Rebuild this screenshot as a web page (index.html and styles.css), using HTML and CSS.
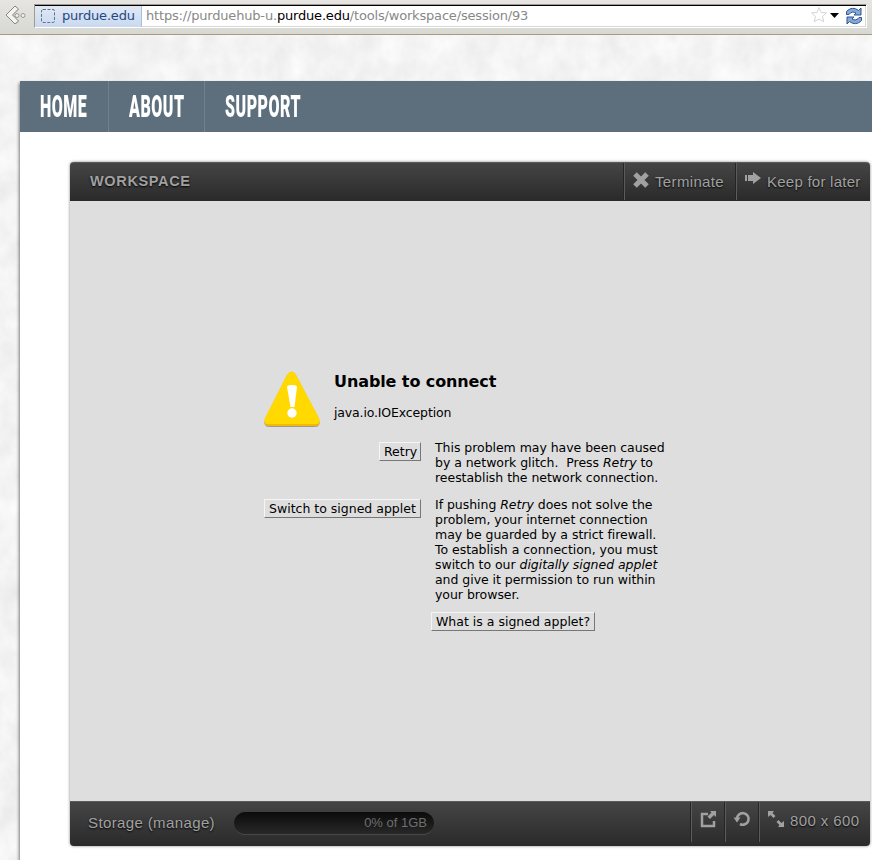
FILE: index.html
```html
<!DOCTYPE html>
<html lang="en">
<head>
<meta charset="utf-8">
<title>Workspace</title>
<link rel="stylesheet" href="styles.css">
</head>
<body>
<header class="browser">
  <svg class="back" width="25" height="24" viewBox="0 0 25 24"><path d="M13 3 5 11l8 9 3-2.500L10 11l6-5.500z" fill="#bbb"/><path d="M12 2 3 11l9 9 3.500-3-6-6L15.500 5z" fill="#f3f3f1" stroke="#888883"/><g fill="#eee" stroke="#999893"><circle cx="14" cy="11.500" r="2"/><circle cx="20" cy="11.500" r="2"/></g></svg>
  <div class="address">
    <div class="identity">
      <svg width="16" height="16" viewBox="0 0 16 16"><rect x="1.500" y="1.500" width="13" height="13" rx="1.500" fill="none" stroke="#68717b" stroke-dasharray="3 1.500"/></svg>
      <span>purdue.edu</span>
    </div>
    <div class="url">https://purduehub-u.<b>purdue.edu</b>/tools/workspace/session/93</div>
    <svg class="tools" width="56" height="20" viewBox="0 0 56 20"><path d="m10 1.500 2.100 5 5.400.3-4 3.700 1.300 5.300L10 13l-4.800 2.800 1.300-5.300-4-3.700 5.400-.3z" fill="#fff" stroke="#d4d4d4"/><path d="M21 7h9l-4.500 5z" fill="#000"/><g fill="#86a9d8" stroke="#2c5595" stroke-width="1" stroke-linejoin="round"><path d="M37.500 8.500v-3c4-4 8-4 12-1l2.500-2.500v7h-7l2-2q-4-2.500-7 1.500z"/><path d="M52.500 11.500v3c-4 4-8 4-12 1L38 18v-7h7l-2 2q4 2.500 7-1.500z"/></g></svg>
  </div>
</header>
<main class="page">
  <svg class="paper" width="872" height="825"><filter id="paper" x="0" y="0" width="100%" height="100%" color-interpolation-filters="sRGB"><feTurbulence type="fractalNoise" baseFrequency=".045 .035" numOctaves="4" seed="8"/><feColorMatrix values=".09 0 0 0 .91  .09 0 0 0 .91  .09 0 0 0 .91  0 0 0 0 1"/></filter><rect width="872" height="825" filter="url(#paper)"/></svg>
  <div class="site">
    <nav class="nav"><a class="home"><span>HOME</span></a><a class="about"><span>ABOUT</span></a><a class="support"><span>SUPPORT</span></a></nav>
    <section class="app">
      <div class="bar top">
        <h1>WORKSPACE</h1>
        <a class="terminate"><svg width="18" height="18" viewBox="0 0 18 18"><path d="M3 3l12 12M15 3 3 15" stroke="#a1a1a1" stroke-width="5"/></svg><span>Terminate</span></a>
        <a class="keep"><svg width="18" height="18" viewBox="0 0 18 18"><path d="M1 6h2v6H1zM4 6h5V3l8 6-8 6v-3H4z" fill="#a1a1a1"/></svg><span>Keep for later</span></a>
      </div>
      <div class="applet">
        <div class="dialog">
          <div class="heading">
            <svg width="58" height="58" viewBox="0 0 58 58"><path d="M24 6Q29 0 33 6L56 50Q58 57 52 57H6Q0 57 2 50z" fill="#9b9b99"/><path d="M24 5Q29-2 33 5L56 49Q58 56 52 56H6Q0 56 2 49z" fill="#f5b900"/><path d="M24 5Q29-2 33 5L56 48Q58 54 52 54H6Q0 54 2 48z" fill="#ffd900"/><path d="M24 17q0-2 5-2t5 2l-2.500 20h-4z" fill="#fff"/><circle cx="29" cy="43" r="4.700" fill="#fff"/></svg>
            <div><h2>Unable to connect</h2><p>java.io.IOException</p></div>
          </div>
          <div class="row retry"><button><span>Retry</span></button><p>This problem may have been caused
by a network glitch.  Press <i>Retry</i> to
reestablish the network connection.</p></div>
          <div class="row switch"><button><span>Switch to signed applet</span></button><p>If pushing <i>Retry</i> does not solve the
problem, your internet connection
may be guarded by a strict firewall.
To establish a connection, you must
switch to our <i>digitally signed applet</i>
and give it permission to run within
your browser.</p></div>
          <button class="what"><span>What is a signed applet?</span></button>
        </div>
      </div>
      <div class="bar bottom">
        <span class="storage">Storage (manage)</span>
        <div class="meter">0% of 1GB</div>
        <a class="icon"><svg width="18" height="18" viewBox="0 0 18 18"><path d="M9 4H3v12h12v-5" fill="none" stroke="#a1a1a1" stroke-width="2.500"/><path d="M11 1h6v6l-2-2-4 4-2.500-2.500 4-4z" fill="#a1a1a1"/></svg></a>
        <a class="icon"><svg width="18" height="18" viewBox="0 0 18 18"><path d="M4 9a5.800 5.800 0 1 1 3 5" fill="none" stroke="#a1a1a1" stroke-width="2.600"/><path d="M.5 7.500h7L4 12.500z" fill="#a1a1a1"/></svg></a>
        <a class="size"><svg width="18" height="18" viewBox="0 0 18 18"><path d="M1 1h6L5.500 3l3 3-2 2-3-3L1 7zM17 17h-6l1.500-2-3-3 2-2 3 3 2.500-2z" fill="#a1a1a1"/></svg><span>800 x 600</span></a>
      </div>
    </section>
  </div>
</main>
</body>
</html>
```
FILE: styles.css
```css
* { box-sizing: border-box; }
body { margin: 0; width: 872px; height: 860px; overflow: hidden; font-family: "Liberation Sans", sans-serif; }
h1, h2, p { margin: 0; font-weight: normal; }
.browser { height: 35px; display: flex; padding: 4px 5px 0 3px; background: linear-gradient(#e6e5e1, #d8d8d2); border-bottom: 1px solid #a39a8a; font: 13px/22px "DejaVu Sans", sans-serif; }
.back { flex: none; margin-right: 6px; }
.address { flex: 1; height: 24px; display: flex; background: #fff; border: solid; border-width: 1px; border-color: #a19a91 #fff #fff #a19a91; box-shadow: inset 1px 1px #000, inset -1px -1px #d8d8d4; }
.identity { display: flex; align-items: center; gap: 6px; width: 107px; margin-top: 1px; height: 21px; padding-left: 5px; background: linear-gradient(#e0e9f6, #c9d9f0); border-right: 1px solid #a9bfdf; color: #27487f; letter-spacing: -.2px; }
.identity svg { position: relative; top: -1px; }
.identity span { line-height: 18px; padding-bottom: 2px; }
.url { padding: 0 0 0 4px; flex: 1; color: #888; white-space: nowrap; letter-spacing: -.18px; }
.url b { font-weight: normal; color: #000; }
.tools { flex: none; margin: 1px 1px 0 0; }
.page { position: relative; height: 825px; padding: 46px 0 0 20px; background: #f4f4f4; }
.paper { position: absolute; left: 0; top: 0; }
.site { position: relative; height: 779px; background: #fff; box-shadow: -1px 2px 3px rgba(0,0,0,.5); }
.nav { display: flex; height: 51px; background: #5d6f7c; }
.nav a { height: 51px; padding-left: 20px; border-right: 1px solid #71828d; font: 900 32px/51px Roboto, sans-serif; color: #fff; }
.nav span { display: inline-block; transform-origin: left; transform: scaleX(.5); letter-spacing: 1px; }
.home { width: 89px; }
.about { width: 96px; }
.nav .support { border: 0; width: 120px; }
.app { width: 800px; margin: 30px 0 0 50px; height: 684px; border-radius: 4px; box-shadow: 0 0 3px rgba(0,0,0,.5); overflow: hidden; background: #dedede; }
.bar { display: flex; background: linear-gradient(#454545, #2a2a2a); border-top: 1px solid #5a5a5a; color: #a1a1a1; text-shadow: 0 1px 2px #000; white-space: nowrap; }
.top { height: 39px; }
h1 { flex: 1; padding-left: 20px; font: bold 14.500px/36px "Liberation Sans", sans-serif; letter-spacing: .65px; }
.bar a { display: flex; border-left: 1px solid #5b5b5b; box-shadow: -1px 0 #252525; }
.top a { height: 37px; font-size: 15px; line-height: 38px; letter-spacing: .35px; }
.top svg { margin: 8px 5px 0 7px; }
.top .keep svg { margin-top: 6px; }
.top .keep { letter-spacing: .25px; }
.terminate { width: 112px; }
.keep { width: 134px; }
.applet { height: 600px; padding: 169px 0 0 194px; font: 12.500px/15px "DejaVu Sans", sans-serif; color: #000; }
.heading { display: flex; gap: 12px; height: 72px; }
.heading svg { margin-left: -1px; margin-right: 1px; }
.heading p { letter-spacing: -.15px; padding-top: 1px; }
h2 { font: bold 16px/20px "DejaVu Sans", sans-serif; margin: 2px 0 12px; letter-spacing: -.1px; }
.row { display: flex; gap: 14px; }
.row p { white-space: pre; margin-top: -2px; letter-spacing: -.04px; }
.row.retry { height: 57px; }
.row.switch { height: 113px; }
button { display: block; height: 19px; margin: 0; padding: 0 0 1px 4px; border: 1px solid; border-color: #f5f5f5 #777 #777 #f5f5f5; background: #dedede; font: inherit; white-space: nowrap; text-align: left; color: #000; overflow: hidden; }
.retry button { width: 42px; margin-left: 115px; }
.switch button { width: 157px; }
.what { width: 164px; margin-left: 167px; }
.bottom { height: 45px; }
.storage { width: 164px; padding-left: 18px; font-size: 15px; line-height: 42px; letter-spacing: .38px; }
.meter { width: 200px; height: 23px; margin: 10px auto 0 0; padding-right: 7px; border-radius: 12px; border-bottom: 1px solid #484848; background: linear-gradient(#0b0b0b, #282828); color: #6e6e6e; font-size: 13px; line-height: 21px; text-align: right; text-shadow: none; }
.bottom a { height: 40px; }
.icon { width: 34px; }
.bottom svg { margin: 8px 0 0 7px; }
.size { width: 111px; font-size: 15px; line-height: 38px; letter-spacing: .4px; }
.size span { margin-left: 5px; }
```
